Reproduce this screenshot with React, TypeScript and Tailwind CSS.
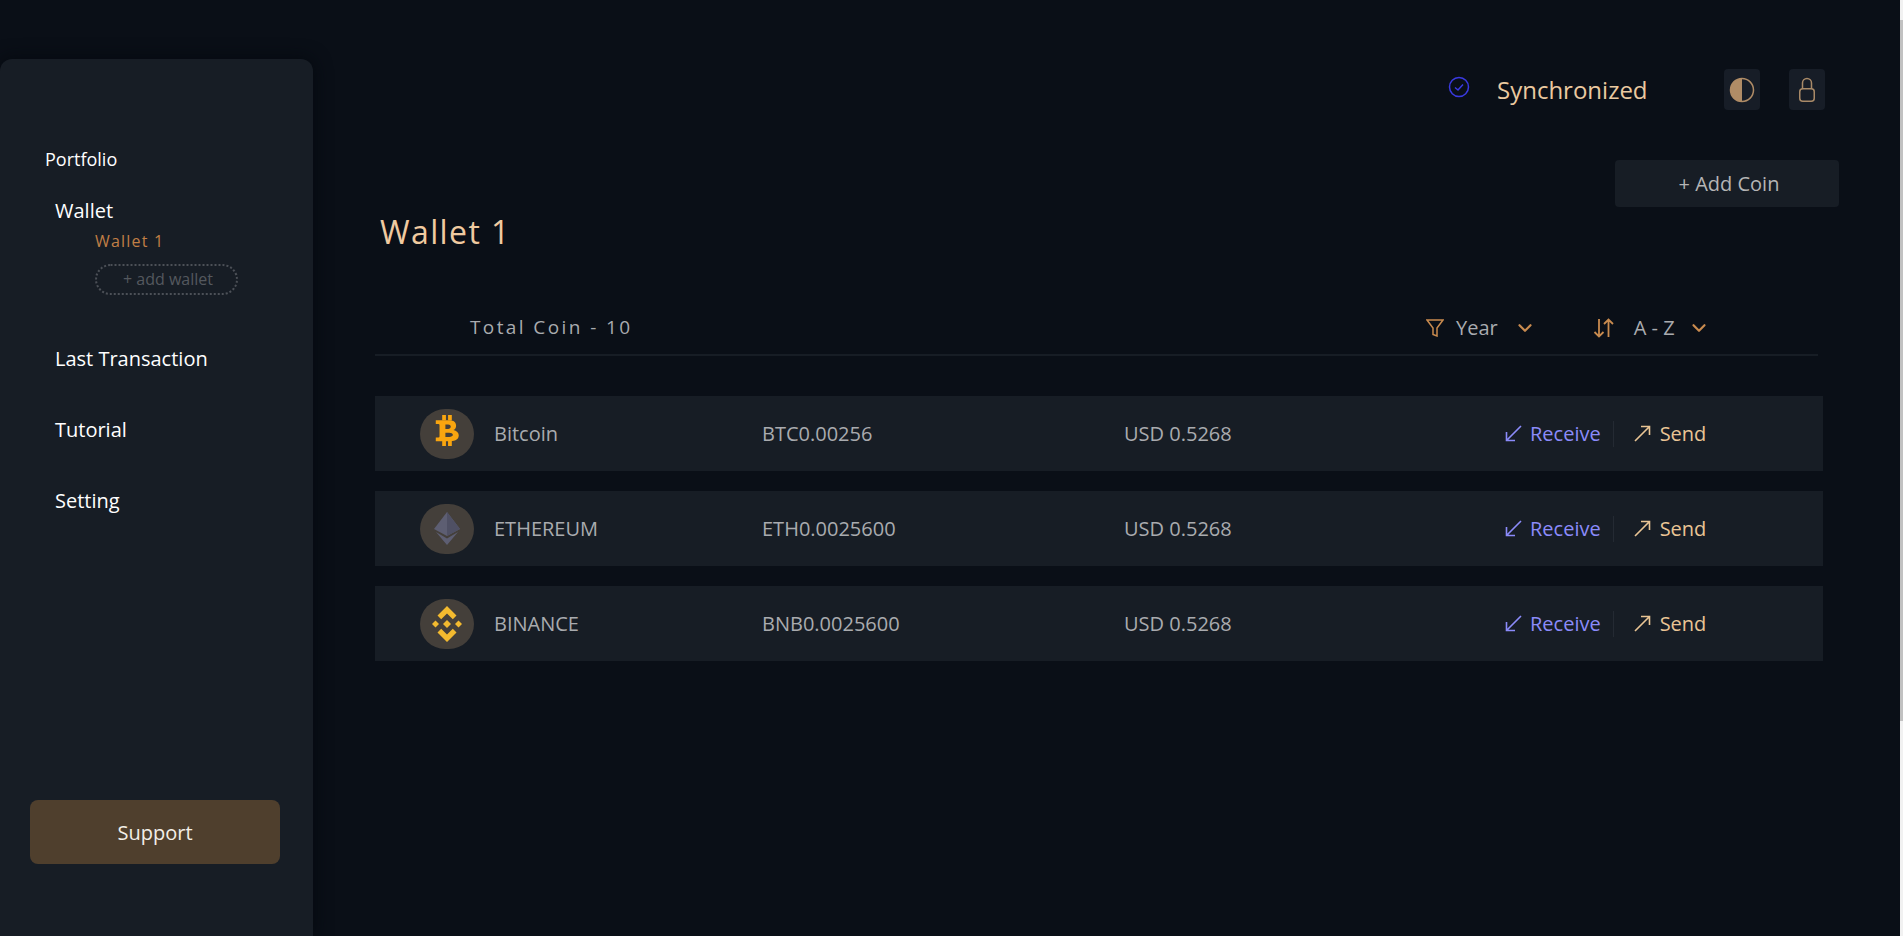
import { ChevronDown } from 'lucide-react';

type Coin = { name: string; amount: string; icon: 'btc' | 'eth' | 'bnb' };

const coins: Coin[] = [
  { name: 'Bitcoin', amount: 'BTC0.00256', icon: 'btc' },
  { name: 'ETHEREUM', amount: 'ETH0.0025600', icon: 'eth' },
  { name: 'BINANCE', amount: 'BNB0.0025600', icon: 'bnb' },
];

function CoinIcon({ icon }: { icon: Coin['icon'] }) {
  if (icon === 'btc') {
    return (
      <svg width="24" height="31" viewBox="0 0 22 29" fill="#f9a50f" className="-mt-[6px] shrink-0">
        <path
          fillRule="evenodd"
          d="M0.500 5 H13 C17.500 5 19.500 7 19.500 10 C19.500 12 18.500 13.500 17 14 C20 14.700 22 16.500 22 19 C22 22.500 19.500 24.500 14 24.500 H0.500 V21 H3 Q4 21 4 20 V9.500 Q4 8.500 3 8.500 H0.500 Z M9.500 9 V13 H12 C13.500 13 14.500 12 14.500 11 C14.500 9.800 13.500 9 12 9 Z M9.500 16.500 V20.500 H13 C15 20.500 16.500 19.800 16.500 18.500 C16.500 17.200 15 16.500 13 16.500 Z"
        />
        <rect x="6.500" y="0" width="3.500" height="5" />
        <rect x="12" y="0" width="3.500" height="5" />
        <rect x="6.500" y="24" width="3.500" height="5" />
        <rect x="12" y="24" width="3.500" height="5" />
      </svg>
    );
  }
  if (icon === 'eth') {
    return (
      <svg width="26" height="33" viewBox="0 0 26 33" className="shrink-0">
        <path d="M13 0 L26 17 L13 24 L0 17 Z" fill="#5d5e72" />
        <path d="M13 0 L26 17 L13 24 Z" fill="#4f5064" />
        <path d="M2 20 L13 26.5 L24 20 L13 33 Z" fill="#5d5e72" />
      </svg>
    );
  }
  return (
    <svg width="30" height="36" viewBox="0 0 30 36" fill="#f3ba2f" className="shrink-0">
      <path d="M15 0 L24.500 9.500 L20.800 13.200 L15 7.400 L9.200 13.200 L5.500 9.500 Z" />
      <path d="M15 36 L5.500 26.500 L9.200 22.800 L15 28.600 L20.800 22.800 L24.500 26.500 Z" />
      <path d="M15 14 L19 18 L15 22 L11 18 Z" />
      <path d="M3.500 14.500 L7 18 L3.500 21.500 L0 18 Z" />
      <path d="M26.500 14.500 L30 18 L26.500 21.500 L23 18 Z" />
    </svg>
  );
}

function Sidebar() {
  return (
    <aside className="mt-[59px] flex w-[313px] shrink-0 flex-col rounded-t-xl bg-[#171d25] shadow-[0_0_18px_#05090f]">
      <div className="pt-[88px] pl-[45px] text-lg leading-6 text-white">Portfolio</div>
      <div className="mt-[26px] pl-[55px] text-xl leading-7 text-white">Wallet</div>
      <div className="mt-[6px] pl-[95px] text-base leading-5 tracking-[1.2px] text-[#c17f45]">Wallet 1</div>
      <div className="mt-[13px] ml-[95px] flex h-[31px] w-[143px] items-center justify-center rounded-full border-2 border-dotted border-[#4c5057] pb-[2px] pl-[3px] text-base text-[#54585e]">
        + add wallet
      </div>
      <nav className="mt-[50px] flex flex-col gap-[43px] pl-[55px] text-xl leading-7 text-white">
        <div>Last Transaction</div>
        <div>Tutorial</div>
        <div>Setting</div>
      </nav>
      <button
        type="button"
        className="mt-[285px] ml-[30px] h-[64px] w-[250px] rounded-lg bg-[#4f3f2d] pt-[2px] text-xl text-[#f3efe8]"
      >
        Support
      </button>
    </aside>
  );
}

function CoinRow({ coin }: { coin: Coin }) {
  return (
    <div className="flex h-[75px] items-center bg-[#171d25] pl-[45px] text-xl text-[#a9abaf]">
      <div className="flex h-[50px] w-[54px] items-center justify-center rounded-full bg-[#443f3a]">
        <CoinIcon icon={coin.icon} />
      </div>
      <div className="ml-[20px] w-[268px]">{coin.name}</div>
      <div className="w-[362px]">{coin.amount}</div>
      <div className="w-[381px]">USD 0.5268</div>
      <div className="flex items-center">
        <svg width="17" height="17" viewBox="0 0 17 17" fill="none" stroke="#8b8bfa" strokeWidth="1.6" className="shrink-0">
          <path d="M16 1 L1.500 15.500 M1.500 7 V15.500 H10" />
        </svg>
        <span className="ml-[8px] text-[#8b8bfa]">Receive</span>
        <span className="mr-[20px] ml-[12px] h-[26px] w-px bg-[#242a33]" />
        <svg width="17" height="17" viewBox="0 0 17 17" fill="none" stroke="#eac595" strokeWidth="1.6" className="shrink-0">
          <path d="M1 16 L15.500 1.500 M7 1.500 H15.500 V10" />
        </svg>
        <span className="ml-[9px] text-[#eac595]">Send</span>
      </div>
    </div>
  );
}

export default function App() {
  return (
    <div className="flex h-[936px] overflow-hidden bg-[#0a0f17] font-['Open_Sans',sans-serif]">
      <Sidebar />
      <main className="flex min-w-0 flex-1 flex-col pl-[62px] pr-[82px]">
        <header className="mt-[69px] flex h-[41px] items-center pl-[1073px]">
          <svg width="22" height="22" viewBox="0 0 22 22" fill="none" stroke="#3a3ae0" strokeWidth="1.5" className="-mt-[6px] shrink-0">
            <circle cx="11" cy="11" r="9.500" />
            <path d="M7 11.500 L10 14 L15 8.500" />
          </svg>
          <span className="ml-[27px] w-[227px] shrink-0 text-2xl text-[#eac9a0]">Synchronized</span>
          <div className="flex h-[41px] w-[36px] shrink-0 items-center justify-center rounded bg-[#171d27]">
            <svg width="26" height="26" viewBox="0 0 26 26">
              <circle cx="13" cy="13" r="11.500" fill="none" stroke="#b08c66" strokeWidth="1.500" />
              <path d="M13 1.500 A11.500 11.500 0 0 0 13 24.500 Z" fill="#b08c66" />
            </svg>
          </div>
          <div className="ml-[29px] flex h-[41px] w-[36px] shrink-0 items-center justify-center rounded bg-[#171d27]">
            <svg width="16" height="25" viewBox="0 0 16 25" fill="none" stroke="#a98a68" strokeWidth="1.500">
              <path d="M3.500 12 V6 A4.500 4.500 0 0 1 12.500 6 V12" />
              <rect x="0.750" y="11.750" width="14.500" height="12.500" rx="3" />
            </svg>
          </div>
        </header>

        <div className="mt-[50px] ml-[1240px] flex h-[47px] w-[224px] shrink-0 items-center justify-center rounded bg-[#171d25] pl-[4px] text-xl text-[#b5b5b5]">
          + Add Coin
        </div>

        <h1 className="mt-[3px] ml-[5px] text-[32px] leading-[44px] tracking-[1.4px] text-[#f0caa0]">Wallet 1</h1>

        <div className="mt-[49px] flex h-[53px] items-center border-b-2 border-[#171d25] pb-[2px] pl-[95px] text-[#a9abaf]">
          <span className="w-[956px] shrink-0 text-[19px] tracking-[2.4px]">Total Coin - 10</span>
          <svg width="18" height="18" viewBox="0 0 18 18" fill="none" stroke="#c98b4f" strokeWidth="1.500" className="shrink-0">
            <path d="M1 1 H17 L11 9 V17 L7 15.500 V9 Z" />
          </svg>
          <span className="ml-[12px] text-xl">Year</span>
          <ChevronDown size={22} strokeWidth={2.4} className="ml-[16px] shrink-0 text-[#c98b4f]" />
          <svg width="22" height="20" viewBox="0 0 22 20" fill="none" stroke="#c98b4f" strokeWidth="1.800" className="ml-[57px] shrink-0">
            <path d="M6 1 V18.500 M1.500 14 L6 18.500 L10.500 14" />
            <path d="M15.500 19 V1.500 M11 6 L15.500 1.500 L20 6" />
          </svg>
          <span className="ml-[19px] text-xl">A - Z</span>
          <ChevronDown size={22} strokeWidth={2.4} className="ml-[13px] shrink-0 text-[#c98b4f]" />
        </div>

        <div className="mt-[40px] flex w-[1448px] flex-col gap-5">
          {coins.map((coin) => (
            <CoinRow key={coin.name} coin={coin} />
          ))}
        </div>
      </main>
      <div className="w-[3px] shrink-0 bg-[#f1f1f1]">
        <div className="mt-5 h-[701px] bg-[#c1c1c1]" />
      </div>
    </div>
  );
}
